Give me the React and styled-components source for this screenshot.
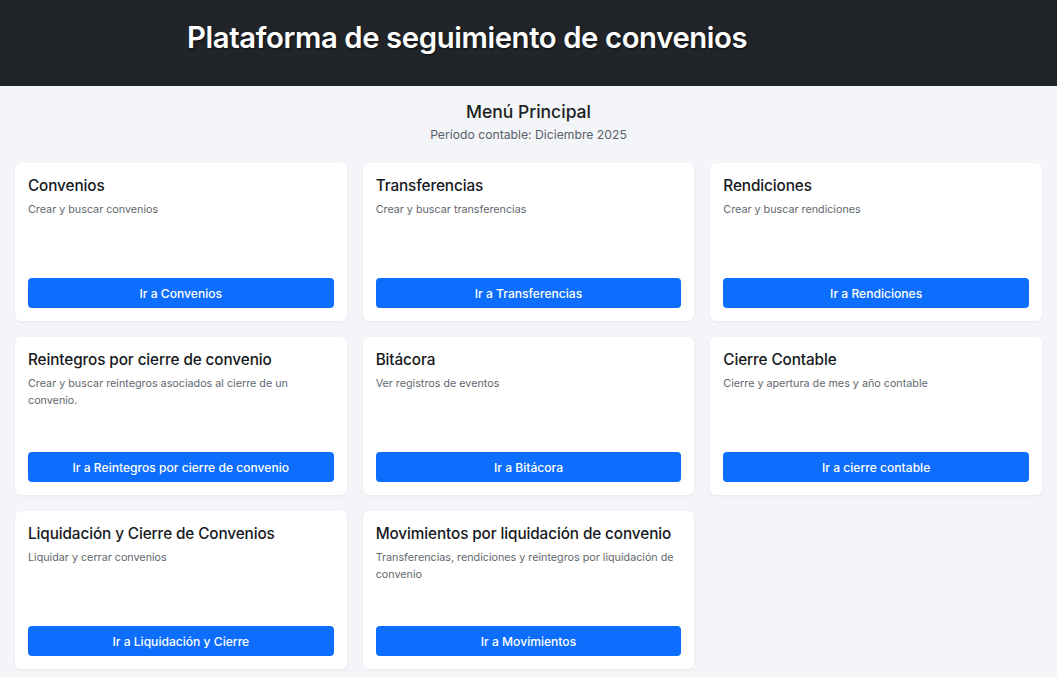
import React from "react";
import styled, { createGlobalStyle } from "styled-components";

const GlobalStyle = createGlobalStyle`
  * { box-sizing: border-box; }
  html, body { margin: 0; padding: 0; }
  body {
    background: #f3f5f8;
    font-family: Inter, "Noto Sans", "Liberation Sans", sans-serif;
    color: #212529;
  }
`;

const Header = styled.header`
  background: #212529;
  height: 86px;
  display: flex;
  align-items: center;
  padding-left: 187px;
  padding-bottom: 11px;
`;

const HeaderTitle = styled.h1`
  margin: 0;
  color: #fff;
  font-size: 29.3px;
  font-weight: 600;
  letter-spacing: -0.4px;
  text-shadow: 1px 1px 2px rgba(0, 0, 0, 0.6);
`;

const Main = styled.main`
  padding: 15px 15px 16px 15px;
`;

const Intro = styled.div`
  text-align: center;
  margin-bottom: 20px;
`;

const PageTitle = styled.h2`
  margin: 0;
  font-size: 17.5px;
  font-weight: 500;
  line-height: 22px;
  color: #1c1f23;
`;

const Period = styled.p`
  margin: 4px 0 0;
  font-size: 12.2px;
  line-height: 16px;
  color: #5a6068;
`;

const Grid = styled.div`
  display: grid;
  grid-template-columns: repeat(3, 1fr);
  gap: 16px 16px;
`;

const Card = styled.section`
  background: #fff;
  border-radius: 6px;
  box-shadow: 0 1px 3px rgba(0, 0, 0, 0.06);
  min-height: 158px;
  padding: 12px 13px 13px;
  display: flex;
  flex-direction: column;
`;

const CardTitle = styled.h3`
  margin: 0;
  font-size: 15.3px;
  font-weight: 500;
  line-height: 21px;
  color: #16191d;
  letter-spacing: -0.1px;
`;

const CardText = styled.p`
  margin: 5px 0 0;
  font-size: 10.75px;
  line-height: 17px;
  color: #62676d;
`;

const Button = styled.button`
  margin-top: auto;
  width: 100%;
  height: 30px;
  border: 0;
  border-radius: 4px;
  background: #0d6efd;
  color: #fff;
  font-family: inherit;
  font-size: 12.1px;
  font-weight: 500;
  cursor: pointer;
`;

const items = [
  { title: "Convenios", text: "Crear y buscar convenios", btn: "Ir a Convenios" },
  { title: "Transferencias", text: "Crear y buscar transferencias", btn: "Ir a Transferencias" },
  { title: "Rendiciones", text: "Crear y buscar rendiciones", btn: "Ir a Rendiciones" },
  {
    title: "Reintegros por cierre de convenio",
    text: "Crear y buscar reintegros asociados al cierre de un convenio.",
    btn: "Ir a Reintegros por cierre de convenio",
  },
  { title: "Bitácora", text: "Ver registros de eventos", btn: "Ir a Bitácora" },
  { title: "Cierre Contable", text: "Cierre y apertura de mes y año contable", btn: "Ir a cierre contable" },
  { title: "Liquidación y Cierre de Convenios", text: "Liquidar y cerrar convenios", btn: "Ir a Liquidación y Cierre" },
  {
    title: "Movimientos por liquidación de convenio",
    text: "Transferencias, rendiciones y reintegros por liquidación de convenio",
    btn: "Ir a Movimientos",
  },
];

export default function App() {
  return (
    <>
      <GlobalStyle />
      <Header>
        <HeaderTitle>Plataforma de seguimiento de convenios</HeaderTitle>
      </Header>
      <Main>
        <Intro>
          <PageTitle>Menú Principal</PageTitle>
          <Period>Período contable: Diciembre 2025</Period>
        </Intro>
        <Grid>
          {items.map((it) => (
            <Card key={it.title}>
              <CardTitle>{it.title}</CardTitle>
              <CardText>{it.text}</CardText>
              <Button>{it.btn}</Button>
            </Card>
          ))}
        </Grid>
      </Main>
    </>
  );
}
